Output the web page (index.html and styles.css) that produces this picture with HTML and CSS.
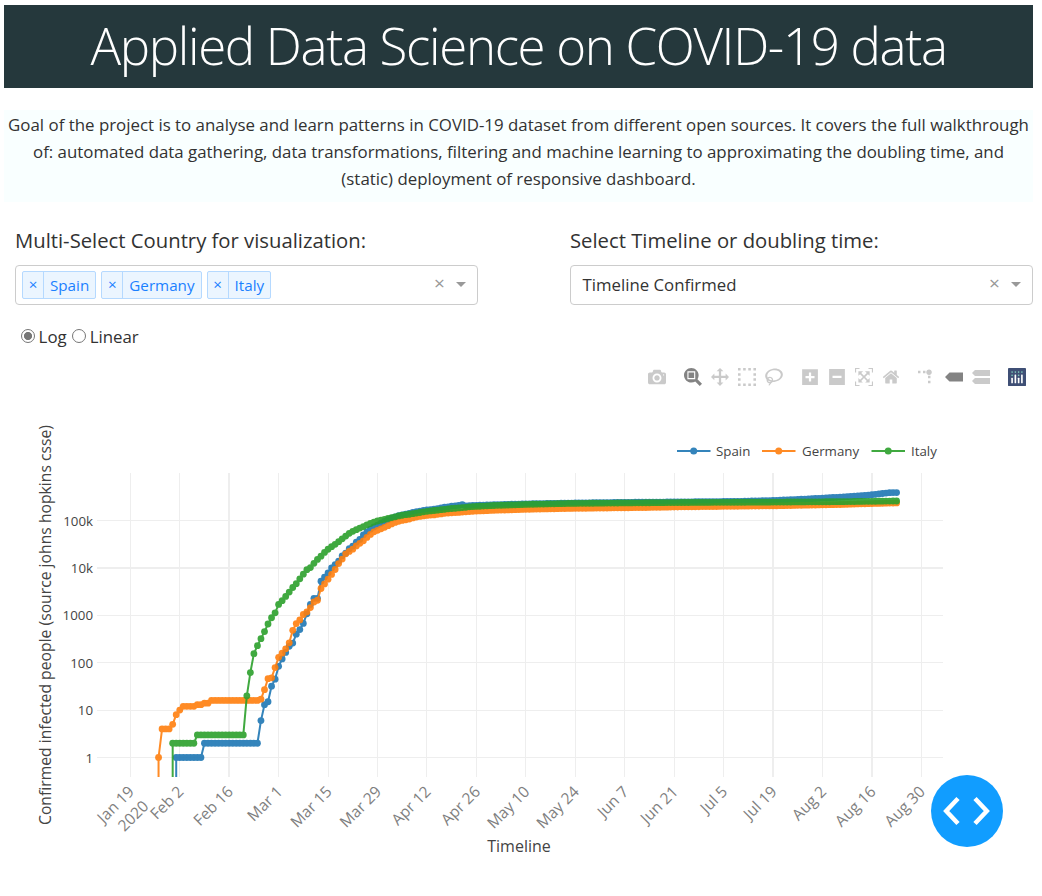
FILE: index.html
```html
<!DOCTYPE html>
<html lang="en">
<head>
<meta charset="utf-8">
<title>Applied Data Science on COVID-19 data</title>
<link rel="stylesheet" href="styles.css">
</head>
<body>
<main class="page">
  <h1 class="banner">Applied Data Science on COVID-19 data</h1>
  <p class="intro">Goal of the project is to analyse and learn patterns in COVID-19 dataset from different open sources. It covers the full walkthrough<br>of: automated data gathering, data transformations, filtering and machine learning to approximating the doubling time, and<br>(static) deployment of responsive dashboard.</p>

  <section class="controls">
    <div class="field">
      <label class="field-label">Multi-Select Country for visualization:</label>
      <div class="select">
        <div class="tags">
          <span class="tag"><span class="tag-x">×</span><span class="tag-name">Spain</span></span>
          <span class="tag"><span class="tag-x">×</span><span class="tag-name">Germany</span></span>
          <span class="tag"><span class="tag-x">×</span><span class="tag-name">Italy</span></span>
        </div>
        <span class="clear">×</span><span class="arrow"></span>
      </div>
    </div>
    <div class="field">
      <label class="field-label">Select Timeline or doubling time:</label>
      <div class="select">
        <span class="value">Timeline Confirmed</span>
        <span class="clear">×</span><span class="arrow"></span>
      </div>
    </div>
  </section>

  <div class="scale">
    <span class="radio on"></span><span class="radio-label">Log</span>
    <span class="radio"></span><span class="radio-label">Linear</span>
  </div>

  <div class="modebar">
    <div class="group">
      <svg class="icon" viewBox="0 0 1000 1000"><path transform="matrix(1 0 0 -1 0 850)" d="m500 450c-83 0-150-67-150-150 0-83 67-150 150-150 83 0 150 67 150 150 0 83-67 150-150 150z m400 150h-120c-16 0-34 13-39 29l-31 93c-6 15-23 28-40 28h-340c-16 0-34-13-39-28l-31-94c-6-15-23-28-40-28h-120c-55 0-100-45-100-100v-450c0-55 45-100 100-100h800c55 0 100 45 100 100v450c0 55-45 100-100 100z m-400-550c-138 0-250 112-250 250 0 138 112 250 250 250 138 0 250-112 250-250 0-138-112-250-250-250z m365 380c-19 0-35 16-35 35 0 19 16 35 35 35 19 0 35-16 35-35 0-19-16-35-35-35z"/></svg>
    </div>
    <div class="group">
      <svg class="icon active" viewBox="0 0 1000 1000"><path transform="matrix(1 0 0 -1 0 850)" d="m1000-25l-250 251c40 63 63 138 63 218 0 224-182 406-407 406-224 0-406-182-406-406s183-406 407-406c80 0 155 22 218 62l250-250 125 125z m-812 250l0 438 437 0 0-438-437 0z m62 375l313 0 0-312-313 0 0 312z"/></svg>
      <svg class="icon" viewBox="0 0 1000 1000"><path transform="matrix(1 0 0 -1 0 850)" d="m1000 350l-187 188 0-125-250 0 0 250 125 0-188 187-187-187 125 0 0-250-250 0 0 125-188-188 186-187 0 125 252 0 0-250-125 0 187-188 188 188-125 0 0 250 250 0 0-126 187 188z"/></svg>
      <svg class="icon" viewBox="0 0 1000 1000"><path d="M0 0h143v143H0zM286 0h143v143H286zM571 0h143v143H571zM857 0h143v143H857zM0 286h143v143H0zM857 286h143v143H857zM0 571h143v143H0zM857 571h143v143H857zM0 857h143v143H0zM286 857h143v143H286zM571 857h143v143H571zM857 857h143v143H857z"/></svg>
      <svg class="icon" viewBox="0 0 1031 1000"><path transform="matrix(1 0 0 -1 0 850)" d="m1018 538c-36 207-290 336-568 286-277-48-473-256-436-463 10-57 36-108 76-151-13-66 11-137 68-183 34-28 75-41 114-42l-55-70 0 0c-2-1-3-2-4-3-10-14-8-34 5-45 14-11 34-8 45 4 1 1 2 3 2 5l0 0 113 140c16 11 31 24 45 40 4 3 6 7 8 11 48-3 100 0 151 9 278 48 473 255 436 462z m-624-379c-80 14-149 48-197 96 42 42 109 47 156 9 33-26 47-66 41-105z m-187-74c-19 16-33 37-39 60 50-32 109-55 174-68-42-25-95-24-135 8z m360 75c-34-7-69-9-102-8 8 62-16 128-68 170-73 59-175 54-244-5-9 20-16 40-20 61-28 159 121 317 333 354s407-60 434-217c28-159-121-318-333-355z"/></svg>
    </div>
    <div class="group">
      <svg class="icon" viewBox="0 0 875 1000"><path transform="matrix(1 0 0 -1 0 850)" d="m1 787l0-875 875 0 0 875-875 0z m687-500l-187 0 0-187-125 0 0 187-188 0 0 125 188 0 0 187 125 0 0-187 187 0 0-125z"/></svg>
      <svg class="icon" viewBox="0 0 875 1000"><path transform="matrix(1 0 0 -1 0 850)" d="m0 788l0-876 875 0 0 876-875 0z m688-500l-500 0 0 125 500 0 0-125z"/></svg>
      <svg class="icon" viewBox="0 0 1000 1000"><path transform="matrix(1 0 0 -1 0 850)" d="m250 850l-187 0-63 0 0-62 0-188 63 0 0 188 187 0 0 62z m688 0l-188 0 0-62 188 0 0-188 62 0 0 188 0 62-62 0z m-875-938l0 188-63 0 0-188 0-62 63 0 187 0 0 62-187 0z m875 188l0-188-188 0 0-62 188 0 62 0 0 62 0 188-62 0z m-125 188l-1 0-93-94-156 156 156 156 92-93 2 0 0 250-250 0 0-2 93-92-156-156-156 156 94 92 0 2-250 0 0-250 0 0 93 93 157-156-157-156-93 94 0 0 0-250 250 0 0 0-94 93 156 157 156-157-93-93 0 0 250 0 0 250z"/></svg>
      <svg class="icon" viewBox="0 0 928.6 1000"><path transform="matrix(1 0 0 -1 0 850)" d="m786 296v-267q0-15-11-26t-25-10h-214v214h-143v-214h-214q-15 0-25 10t-11 26v267q0 1 0 2t0 2l321 264 321-264q1-1 1-4z m124 39l-34-41q-5-5-12-6h-2q-7 0-12 3l-386 322-386-322q-7-4-13-4-7 2-12 7l-35 41q-4 5-3 13t6 12l401 334q18 15 42 15t43-15l136-114v109q0 8 5 13t13 5h107q8 0 13-5t5-13v-227l122-102q5-5 6-12t-4-13z"/></svg>
    </div>
    <div class="group">
      <svg class="icon" viewBox="0 0 1000 1000"><path transform="matrix(1.5 0 0 -1.5 0 850)" d="M512 409c0-57-46-104-103-104-57 0-104 47-104 104 0 57 47 103 104 103 57 0 103-46 103-103z m-327-39l92 0 0 92-92 0z m-185 0l92 0 0 92-92 0z m370-186l92 0 0 93-92 0z m0-184l92 0 0 92-92 0z"/></svg>
      <svg class="icon active" viewBox="0 0 1500 1000"><path transform="matrix(1 0 0 -1 0 850)" d="m375 725l0 0-375-375 375-374 0-1 1125 0 0 750-1125 0z"/></svg>
      <svg class="icon" viewBox="0 0 1125 1000"><path transform="matrix(1 0 0 -1 0 850)" d="m187 786l0 2-187-188 188-187 0 0 937 0 0 373-938 0z m0-499l0 1-187-188 188-188 0 0 937 0 0 376-938-1z"/></svg>
    </div>
    <div class="group">
      <svg class="icon logo" viewBox="0 0 132 132"><rect class="logo-bg" width="132" height="132" rx="3"/><g class="logo-dot"><circle cx="30" cy="30" r="6"/><circle cx="54" cy="30" r="6"/><circle cx="78" cy="30" r="6"/><circle cx="102" cy="30" r="6"/><circle cx="30" cy="54" r="6"/><circle cx="78" cy="54" r="6"/></g><g class="logo-bar"><rect x="24" y="72" width="12" height="40" rx="4"/><rect x="48" y="48" width="12" height="64" rx="4"/><rect x="72" y="72" width="12" height="40" rx="4"/><rect x="96" y="48" width="12" height="64" rx="4"/></g></svg>
    </div>
  </div>

  <svg class="chart" viewBox="0 396 1042 480" width="1042" height="480">
    <defs><clipPath id="plot"><rect x="97" y="473" width="846" height="304"/></clipPath></defs>
    <g id="grid"></g>
    <g id="traces" clip-path="url(#plot)"></g>
    <g id="ticks"></g>
    <g id="legend"></g>
    <text class="axis-title" x="519" y="851.6" text-anchor="middle">Timeline</text>
    <text class="axis-title axis-title-y" transform="translate(50.5 625) rotate(-90)" text-anchor="middle">Confirmed infected people (source johns hopkins csse)</text>
  </svg>
  <button class="devtools" aria-label="Debug menu"><svg viewBox="0 0 72 72" width="72" height="72"><path d="M27 23.5 15.2 36 27 48.5M44 23.5 55.800 36 44 48.500"/></svg></button>
</main>
<script src="chart.js"></script>
</body>
</html>
```
FILE: styles.css
```css
* { box-sizing: border-box; }
body { margin: 0; background: #fff; color: #323232; font-family: "Open Sans", sans-serif; overflow: hidden; }
.page { position: relative; width: 1042px; height: 896px; padding: 5px 9px 0 4px; }
.banner { margin: 0; height: 83px; background: #25383c; color: #fff; font-size: 51px; font-weight: 300; letter-spacing: -1.32px; line-height: 81px; text-align: center; white-space: nowrap; }
.intro { margin: 22px 0 0; height: 92px; padding-top: 1px; background: #f9ffff; font-size: 16.88px; line-height: 27px; text-align: center; white-space: nowrap; }
.controls { display: flex; justify-content: space-between; margin-top: 24px; padding-left: 11px; }
.field { width: 463px; }
.field-label { display: block; height: 39px; font-size: 20.28px; line-height: 28px; white-space: nowrap; }
.select { display: flex; align-items: center; height: 40px; padding: 0 11px 0 6px; border: 1px solid #ccc; border-radius: 4px; font-size: 16.8px; color: #333; }
.tags { display: flex; gap: 5.1px; flex: 1; }
.tag { display: flex; height: 28px; border: 1px solid #b5d9ff; border-radius: 2px; background: #ebf5ff; color: #1a80ff; font-size: 15.2px; line-height: 27px; }
.tag-x { width: 21px; border-right: 1px solid #b5d9ff; text-align: center; line-height: 25px; }
.tag-name { padding: 0 6px; }
.value { flex: 1; padding: 0 0 2px 5.5px; }
.clear { width: 17px; margin-right: 8px; color: #999; font-size: 19px; text-align: center; line-height: 34px; margin-top: -5px; }
.arrow { margin-top: -2px; border: 5.500px solid transparent; border-top-color: #999; border-bottom: 0; }
.scale { display: flex; align-items: center; height: 24px; margin-top: 19px; padding-left: 17px; font-size: 16.85px; }
.radio { width: 14px; height: 14px; border: 1px solid #767676; border-radius: 50%; margin-right: 3.6px; }
.radio.on { background: radial-gradient(circle, #767676 0 3.700px, #fff 4.400px); }
.radio-label { margin-right: 5.4px; }
.modebar { display: flex; justify-content: flex-end; gap: 18px; height: 18px; margin-top: 20px; padding-right: 7px; }
.group { display: flex; gap: 9px; }
.icon { width: 18px; height: 18px; fill: #cacaca; }
.icon.active { fill: #838383; }
.logo-bg { fill: #3f4f75; }
.logo-dot { fill: #80cfbe; }
.logo-bar { fill: #fff; }
.chart { display: block; margin: 10px 0 0 -4px; fill: #444; }
.grid-line { stroke: #eee; stroke-width: 1; shape-rendering: crispEdges; }
.grid-line.wide { stroke-width: 2; }
.tick { font-size: 13.300px; fill: #444; }
.tick-x { font-size: 15.6px; fill: #7f7f7f; }
.axis-title { font-size: 16px; fill: #444; }
.axis-title-y { font-size: 15.72px; }
.trace { opacity: .9; }
.trace-line { fill: none; stroke-width: 2; stroke-linejoin: round; }
.devtools { position: absolute; left: 931px; top: 775px; width: 72px; height: 72px; padding: 0; border: 0; border-radius: 50%; background: #119dff; }
.devtools svg { display: block; fill: none; stroke: #fff; stroke-width: 4.500; }
```
FILE: chart.js
```js
const NS = 'http://www.w3.org/2000/svg';
const add = (parent, name, attrs, text) => {
  const el = document.createElementNS(NS, name);
  for (const k in attrs) el.setAttribute(k, attrs[k]);
  if (text) el.textContent = text;
  parent.appendChild(el);
  return el;
};
const byId = id => document.getElementById(id);
const px = day => 130.3 + day * 3.5313;
const py = v => 757.5 - Math.log10(v) * 47.4;
const rep = (v, n) => Array(n).fill(v);

// Daily totals from `start` (days after Jan 19), followed by [day, total] anchors up to late August.
const series = [
  { name: 'Spain', color: '#1f77b4', start: 13, daily: [...rep(1, 8), ...rep(2, 16), 6, 13, 15, 32, 45, 84, 120, 165, 222, 259, 400, 500, 673, 1073, 1695, 2277, 2277, 5232, 6391, 7798, 9942, 11748, 13910, 17963, 20410, 25374, 28768, 35136, 39885, 49515, 57786, 65719, 73235, 80110, 87956, 95923, 104118, 112065, 119199, 126168, 131646, 136675, 141942, 148220, 153222, 158273, 163027, 166831, 170099, 172541, 177644, 184948, 190839, 194500, 200210, 204178, 208389, 215500, 202990, 205905, 207634],
    anchors: [[103, 215216], [112, 224350], [124, 233037], [140, 241550], [155, 246504], [172, 253056], [182, 264836], [192, 285430], [202, 314362], [209, 342813], [213, 370867], [215, 386054], [216, 388000], [217, 388000]] },
  { name: 'Germany', color: '#ff7f0e', start: 8, daily: [1, 4, 4, 4, 5, 8, 10, 12, 12, 12, 12, 13, 13, 14, 14, ...rep(16, 14), 17, 27, 46, 48, 79, 130, 159, 196, 262, 482, 670, 799, 1040, 1176, 1457, 1908, 2078, 3675, 4585, 5795, 7272, 9257, 12327, 15320, 19848, 22213, 24873, 29056, 32986, 37323, 43938, 50871, 57695, 62095, 66885, 71808, 77872, 84794, 91159, 96092, 100123, 103374, 107663, 113296, 118181, 122171, 124908, 127854, 130072, 131359, 134753, 137698, 141397, 143342, 145184, 147065, 148291, 150648, 153129, 154999, 156513, 157770],
    anchors: [[103, 164077], [112, 171879], [124, 179710], [140, 185450], [155, 192480], [172, 199919], [182, 203717], [192, 211005], [202, 218508], [209, 226914], [217, 234494]] },
  { name: 'Italy', color: '#2ca02c', start: 12, daily: [...rep(2, 7), ...rep(3, 14), 20, 62, 155, 229, 322, 453, 655, 888, 1128, 1694, 2036, 2502, 3089, 3858, 4636, 5883, 7375, 9172, 10149, 12462, 15113, 17660, 21157, 24747, 27980, 31506, 35713, 41035, 47021, 53578, 59138, 63927, 69176, 74386, 80589, 86498, 92472, 97689, 101739, 105792, 110574, 115242, 119827, 124632, 128948, 132547, 135586, 139422, 143626, 147577, 152271, 156363, 159516, 162488, 165155, 168941, 172434, 175925, 178972, 181228, 183957, 187327, 189973, 192994, 195351, 197675],
    anchors: [[103, 207428], [112, 218268], [124, 228658], [140, 234801], [155, 239410], [172, 242639], [182, 244216], [192, 247158], [202, 250103], [209, 253915], [217, 258136]] }
];

const months = ['Jan 19', 'Feb 2', 'Feb 16', 'Mar 1', 'Mar 15', 'Mar 29', 'Apr 12', 'Apr 26', 'May 10', 'May 24', 'Jun 7', 'Jun 21', 'Jul 5', 'Jul 19', 'Aug 2', 'Aug 16', 'Aug 30'];
months.forEach((label, i) => {
  const x = px(i * 14);
  add(byId('grid'), 'line', { x1: x, x2: x, y1: 473, y2: 777, class: 'grid-line' + ([2, 13, 15].includes(i) ? ' wide' : '') });
  add(byId('ticks'), 'text', { transform: `translate(${x - 2.2} 785.5) rotate(-45)`, x: 0, y: 10, 'text-anchor': 'end', class: 'tick-x' }, label);
  if (i === 0) add(byId('ticks'), 'text', { transform: `translate(${x - 2.2} 785.5) rotate(-45)`, x: 0, y: 30.5, 'text-anchor': 'end', class: 'tick-x' }, '2020');
});
['1', '10', '100', '1000', '10k', '100k'].forEach((label, i) => {
  const y = py(10 ** i);
  add(byId('grid'), 'line', { x1: 97, x2: 943, y1: y, y2: y, class: 'grid-line' + (i === 4 ? ' wide' : '') });
  add(byId('ticks'), 'text', { x: 93, y: y + 5, 'text-anchor': 'end', class: 'tick' }, label);
});

series.forEach(s => {
  const pts = s.daily.map((v, i) => [s.start + i, v]);
  for (const [day, value] of s.anchors) {
    const [d0, v0] = pts[pts.length - 1];
    for (let d = d0 + 1; d <= day; d++) pts.push([d, v0 * (value / v0) ** ((d - d0) / (day - d0))]);
  }
  const g = add(byId('traces'), 'g', { class: 'trace' });
  const xy = pts.map(([d, v]) => [px(d).toFixed(2), py(v).toFixed(2)]);
  add(g, 'path', { d: `M${xy[0][0]} 800L` + xy.map(p => p.join(' ')).join('L'), stroke: s.color, class: 'trace-line' });
  xy.forEach(([cx, cy]) => add(g, 'circle', { cx, cy, r: 3.4, fill: s.color }));
});

[[677, 716], [762, 802], [871.5, 911]].forEach(([x, tx], i) => {
  const g = add(byId('legend'), 'g', { class: 'trace' });
  add(g, 'path', { d: `M${x} 451h33.500`, stroke: series[i].color, class: 'trace-line' });
  add(g, 'circle', { cx: x + 16.7, cy: 451, r: 3.5, fill: series[i].color });
  add(byId('legend'), 'text', { x: tx, y: 456, class: 'tick' }, series[i].name);
});
```
